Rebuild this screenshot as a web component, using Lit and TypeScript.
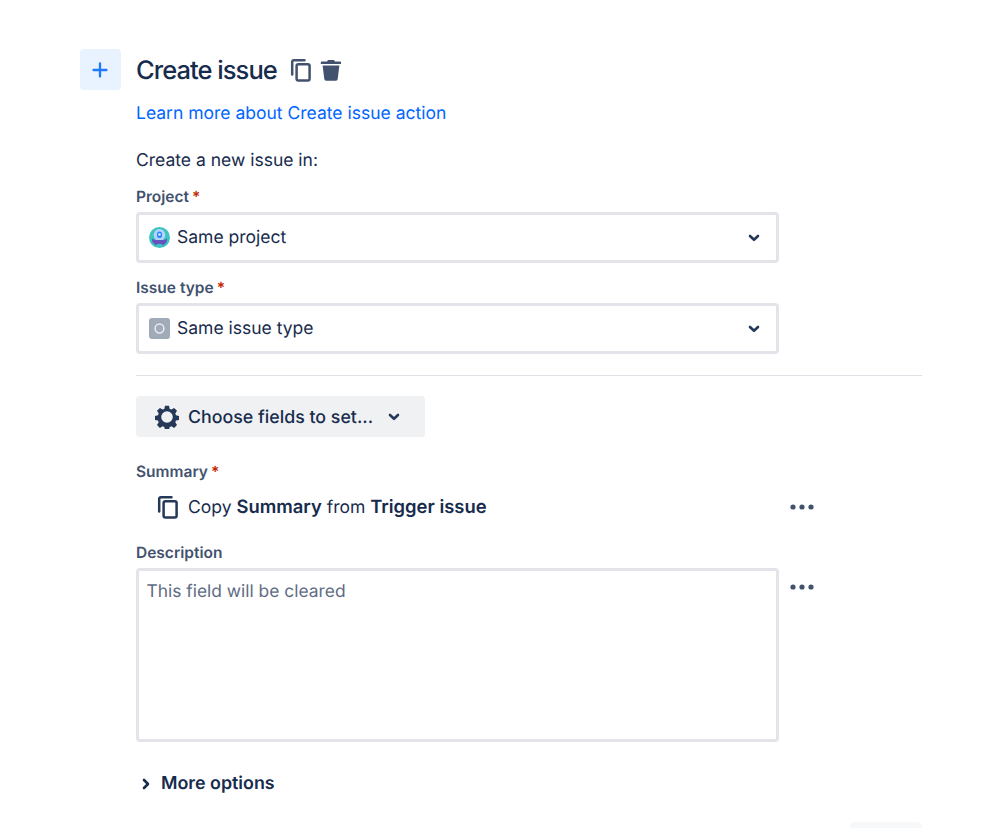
import { LitElement, html, css } from "lit";
import { customElement } from "lit/decorators.js";

const copyIcon = (size: number, color: string) => html`<svg width=${size} height=${size} viewBox="0 0 24 24" fill="none" stroke=${color} stroke-width="2.5" stroke-linejoin="round" stroke-linecap="round"><path d="M3.2 16.5V3.8a1.6 1.6 0 0 1 1.6-1.6h10.7"/><rect x="7.6" y="6.2" width="13" height="16.4" rx="1.8"/></svg>`;

const chevronDown = html`<svg class="chev" width="12" height="8" viewBox="0 0 12 8" fill="none" stroke="#253858" stroke-width="2.6" stroke-linecap="round" stroke-linejoin="round"><path d="M2 2l4 3.8L10 2"/></svg>`;

const dots = html`<svg class="dots" width="26" height="8" viewBox="0 0 26 8" fill="#42526e"><circle cx="4" cy="4" r="2.6"/><circle cx="13" cy="4" r="2.6"/><circle cx="22" cy="4" r="2.6"/></svg>`;

@customElement("app-root")
export class AppRoot extends LitElement {
  static styles = css`
    :host { display: block; height: 828px; overflow: hidden; background: #fff; font-family: Inter, "Liberation Sans", sans-serif; color: #172b4d; font-size: 17.5px; text-rendering: geometricPrecision; }
    .page { display: grid; grid-template-columns: 41px 786px; column-gap: 15px; padding: 49px 0 0 80px; }
    .plus { width: 41px; height: 41px; border-radius: 4px; background: #e9f2ff; display: flex; align-items: center; justify-content: center; }
    .plus svg { margin-right: 1px; }
    .title-row { display: flex; align-items: center; height: 41px; }
    h1 { margin: 0; padding-top: 1px; font-size: 25.5px; font-weight: 500; letter-spacing: -0.95px; line-height: 41px; color: #172b4d; }
    .tools { display: flex; align-items: center; margin-left: 12px; gap: 7px; }
    .link { display: block; color: #0065ff; line-height: 24px; margin-top: 12px; text-decoration: none; }
    .lead { line-height: 24px; margin-top: 23px; color: #172b4d; }
    .label { font-size: 15.5px; font-weight: 600; color: #42526e; line-height: 20px; display: block; }
    .req { color: #bf2600; margin-left: 3px; }
    .l1 { margin-top: 14px; }
    .l2 { margin-top: 15px; }
    .select { box-sizing: border-box; width: 643px; height: 51px; border: 3px solid #e2e4e9; border-radius: 4px; display: flex; align-items: center; padding: 0 16.5px 0 10px; margin-top: 5px; gap: 7px; background: #fff; }
    .select span { flex: 1; line-height: 24px; }
    .sep { height: 1px; background: #dfe1e6; margin-top: 21px; }
    .choose { margin-top: 20px; box-sizing: border-box; width: 289px; height: 41px; border-radius: 4px; background: #f0f1f3; display: flex; align-items: center; padding-left: 18.5px; font-weight: 500; font-size: 17.8px; color: #172b4d; }
    .choose .txt { margin-left: 9.5px; padding-top: 1px; }
    .choose .chev { margin-left: 15px; }
    .l3 { margin-top: 25px; }
    .row { display: flex; align-items: center; }
    .summary { height: 34px; width: 679px; margin-top: 8px; padding-left: 20px; box-sizing: border-box; }
    .summary .txt { margin-left: 8px; flex: 1; }
    b { font-weight: 600; font-size: 18.4px; }
    .l4 { margin-top: 19px; }
    .desc-row { display: flex; align-items: flex-start; margin-top: 5px; }
    .textarea { box-sizing: border-box; width: 643px; height: 174px; border: 3px solid #e2e4e9; border-radius: 4px; padding: 8.5px 7.5px; color: #5e6c84; line-height: 24px; font-size: 17.4px; }
    .desc-row .dots { margin: 15px 0 0 10px; }
    .more { display: flex; align-items: center; margin-top: 30px; font-weight: 600; font-size: 17.85px; color: #172b4d; line-height: 24px; }
    .more .txt { margin-left: 10px; }
    .more svg { margin-left: 6px; }
    .ghost { width: 72px; height: 30px; background: #f7f8f9; border-radius: 5px; margin: 26px 0 0 714px; }
  `;

  render() {
    return html`<div class="page">
      <div class="plus">
        <svg width="16" height="16" viewBox="0 0 16 16" fill="none" stroke="#1d7afc" stroke-width="2.3" stroke-linecap="round"><path d="M8 1.5v13M1.5 8h13"/></svg>
      </div>
      <div>
        <div class="title-row">
          <h1>Create issue</h1>
          <div class="tools">
            ${copyIcon(24, "#42526e")}
            <svg width="22" height="22" viewBox="0 0 22 22" fill="#42526e"><path d="M8 1h6l1 1.6h5.2a.8.8 0 0 1 .8.8V5H.8V3.4a.8.8 0 0 1 .8-.8H7z"/><path d="M2.6 6.4h16.8l-1.7 13.7a1.8 1.8 0 0 1-1.8 1.6H6.1a1.8 1.8 0 0 1-1.8-1.6z"/></svg>
          </div>
        </div>
        <a class="link">Learn more about Create issue action</a>
        <div class="lead">Create a new issue in:</div>

        <label class="label l1">Project<span class="req">*</span></label>
        <div class="select">
          <svg width="21" height="21" viewBox="0 0 21 21">
            <circle cx="10.5" cy="10.5" r="10.5" fill="#3ec4c0"/>
            <ellipse cx="10.5" cy="8" rx="5.8" ry="6" fill="#b3d4ff"/>
            <rect x="8" y="4.5" width="5" height="6.5" rx="2.5" fill="#2684ff"/>
            <circle cx="10.5" cy="7.5" r="1.3" fill="#deebff"/>
            <path d="M3.2 11.5c1.2 1 2.4 1.5 7.3 1.5s6.1-.5 7.3-1.5c.6 2.6-.5 5-2.3 5.2l-.6 1.6h-1.4l-.3-1.3H7.8l-.3 1.3H6.1l-.6-1.6c-1.8-.2-2.9-2.6-2.3-5.2z" fill="#6554c0"/>
          </svg>
          <span>Same project</span>${chevronDown}
        </div>

        <label class="label l2">Issue type<span class="req">*</span></label>
        <div class="select">
          <svg width="21" height="21" viewBox="0 0 21 21"><rect width="21" height="21" rx="3" fill="#a0aab8"/><circle cx="10.5" cy="10.5" r="4.4" fill="none" stroke="#ebecf0" stroke-width="1.5"/></svg>
          <span>Same issue type</span>${chevronDown}
        </div>

        <div class="sep"></div>

        <div class="choose">
          <svg width="24" height="24" viewBox="0 0 24 24" fill="#253858"><path fill-rule="evenodd" d="M10 .8h4l.7 3.1 1.7.7 2.7-1.7 2.9 2.9-1.7 2.7.7 1.7 3.1.7v4l-3.1.7-.7 1.7 1.7 2.7-2.9 2.9-2.7-1.7-1.7.7-.7 3.1h-4l-.7-3.1-1.7-.7-2.7 1.7-2.9-2.9 1.7-2.7-.7-1.7-3.1-.7v-4l3.1-.7.7-1.7-1.7-2.7 2.9-2.9 2.7 1.7 1.7-.7zM12 6.2a5.8 5.8 0 1 0 0 11.6 5.8 5.8 0 0 0 0-11.6z"/></svg>
          <span class="txt">Choose fields to set...</span>${chevronDown}
        </div>

        <label class="label l3">Summary<span class="req">*</span></label>
        <div class="row summary">
          ${copyIcon(24, "#253858")}
          <span class="txt">Copy <b>Summary</b> from <b>Trigger issue</b></span>
          ${dots}
        </div>

        <label class="label l4">Description</label>
        <div class="desc-row">
          <div class="textarea">This field will be cleared</div>
          ${dots}
        </div>

        <div class="more">
          <svg width="9" height="12" viewBox="0 0 9 12" fill="none" stroke="#172b4d" stroke-width="2.6" stroke-linecap="round" stroke-linejoin="round"><path d="M2 2l4 4-4 4"/></svg>
          <span class="txt">More options</span>
        </div>
        <div class="ghost"></div>
      </div>
    </div>`;
  }
}
